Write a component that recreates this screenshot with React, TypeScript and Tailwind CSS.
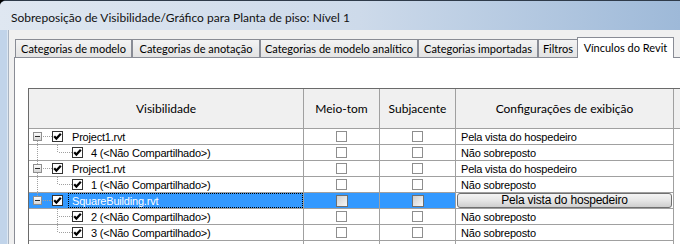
import React from 'react';

type Row = {
  kind: 'root' | 'child';
  label: string;
  display: string;
  first?: boolean;
  moreRoots: boolean;
  lastChild?: boolean;
  selected?: boolean;
};

const rows: Row[] = [
  { kind: 'root', label: 'Project1.rvt', display: 'Pela vista do hospedeiro', first: true, moreRoots: true },
  { kind: 'child', label: '4 (<Não Compartilhado>)', display: 'Não sobreposto', moreRoots: true, lastChild: true },
  { kind: 'root', label: 'Project1.rvt', display: 'Pela vista do hospedeiro', moreRoots: true },
  { kind: 'child', label: '1 (<Não Compartilhado>)', display: 'Não sobreposto', moreRoots: true, lastChild: true },
  { kind: 'root', label: 'SquareBuilding.rvt', display: 'Pela vista do hospedeiro', moreRoots: false, selected: true },
  { kind: 'child', label: '2 (<Não Compartilhado>)', display: 'Não sobreposto', moreRoots: false },
  { kind: 'child', label: '3 (<Não Compartilhado>)', display: 'Não sobreposto', moreRoots: false, lastChild: true },
];

const tabs = [
  { label: 'Categorias de modelo', w: 'w-[117px]' },
  { label: 'Categorias de anotação', w: 'w-[128px]' },
  { label: 'Categorias de modelo analítico', w: 'w-[158px]' },
  { label: 'Categorias importadas', w: 'w-[120px]' },
  { label: 'Filtros', w: 'w-[40px]' },
];

const dot = { stroke: '#a0a0a0', strokeWidth: 1, strokeDasharray: '1 1' };

function VisCheck({ checked }: { checked: boolean }) {
  return (
    <span className="w-[11px] h-[11px] border border-[#333333] bg-white flex items-center justify-center shrink-0">
      {checked && (
        <svg width="9" height="9" viewBox="0 0 9 9">
          <path d="M1.2 4.2 L3.4 6.6 L7.8 1.8" stroke="#000" strokeWidth="2.2" fill="none" />
        </svg>
      )}
    </span>
  );
}

function GridCheck({ selected }: { selected?: boolean }) {
  return selected ? (
    <span className="w-[12px] h-[12px] border border-[#6f6f6f] bg-gradient-to-br from-[#cfcfcf] to-[#f7f7f7]" />
  ) : (
    <span className="w-[11px] h-[11px] border border-[#8e8e8e] bg-white" />
  );
}

function RootLines({ first, moreRoots }: { first?: boolean; moreRoots: boolean }) {
  return (
    <svg width="23" height="15" className="shrink-0">
      <defs>
        <linearGradient id="exp" x1="0" y1="0" x2="0" y2="1">
          <stop offset="0" stopColor="#ffffff" />
          <stop offset="1" stopColor="#d2d2d2" />
        </linearGradient>
      </defs>
      {!first && <line x1="8.5" y1="0" x2="8.5" y2="3" {...dot} />}
      {moreRoots && <line x1="8.5" y1="12" x2="8.5" y2="15" {...dot} />}
      <rect x="4.5" y="3.5" width="8" height="8" fill="url(#exp)" stroke="#8f8f8f" />
      <rect x="6" y="7" width="5" height="1" fill="#2a2a2a" />
      <line x1="14" y1="7.5" x2="23" y2="7.5" {...dot} />
    </svg>
  );
}

function ChildLines({ moreRoots, lastChild }: { moreRoots: boolean; lastChild?: boolean }) {
  return (
    <svg width="43" height="15" className="shrink-0">
      {moreRoots && <line x1="8.5" y1="0" x2="8.5" y2="15" {...dot} />}
      <line x1="28.5" y1="0" x2="28.5" y2={lastChild ? 8 : 15} {...dot} />
      <line x1="30" y1="7.5" x2="43" y2="7.5" {...dot} />
    </svg>
  );
}

function DataRow({ row }: { row: Row }) {
  const sel = row.selected;
  return (
    <div className="flex h-[16px]">
      <div className={`w-[275px] h-full border-r border-b border-[#a0a0a0] flex items-center ${sel ? 'bg-[#3399ff] text-white' : 'text-black'}`}>
        {row.kind === 'root' ? (
          <RootLines first={row.first} moreRoots={row.moreRoots} />
        ) : (
          <ChildLines moreRoots={row.moreRoots} lastChild={row.lastChild} />
        )}
        <VisCheck checked />
        <span
          className={`flex-1 h-full pl-[3px] leading-[14px] border ${row.kind === 'root' ? 'ml-[5px]' : 'ml-[4px]'} ${sel ? 'border-dotted border-black' : 'border-transparent'}`}
        >
          {row.label}
        </span>
      </div>
      <div className={`w-[76px] h-full border-r border-b border-[#a0a0a0] flex items-center justify-center ${sel ? 'bg-[#3399ff]' : ''}`}>
        <GridCheck selected={sel} />
      </div>
      <div className={`w-[76px] h-full border-r border-b border-[#a0a0a0] flex items-center justify-center ${sel ? 'bg-[#3399ff]' : ''}`}>
        <GridCheck selected={sel} />
      </div>
      <div className="w-[218px] h-full border-r border-b border-[#a0a0a0] flex items-center">
        {sel ? (
          <div className="mx-[1px] flex-1 h-full rounded-[3px] border border-[#707070] bg-gradient-to-b from-[#f4f4f4] via-[#e6e6e6] to-[#cfcfcf] flex items-end justify-center text-[12px] leading-[13px] text-black">
            Pela vista do hospedeiro
          </div>
        ) : (
          <span className="pl-[5px] leading-[16px]">{row.display}</span>
        )}
      </div>
      <div className="flex-1" />
    </div>
  );
}

export default function App() {
  return (
    <div className="w-[680px] h-[244px] overflow-hidden bg-black">
      <div className="w-[720px] h-[262px] rounded-tl-[6px] border-t border-[#2f3b4a] overflow-hidden flex flex-col bg-[#c2d4ea]">
        <div className="h-[29px] shrink-0 flex items-center pl-[11px] pt-[4px] bg-gradient-to-r from-[#dfe7f1] via-[#cddaea] to-[#98b5d6] font-['Lato',sans-serif] text-[12px] text-[#111111] whitespace-nowrap">
          Sobreposição de Visibilidade/Gráfico para Planta de piso: Nível 1
        </div>
        <div className="flex flex-1">
          <div className="w-[7px] bg-[#c1d4ea]" />
          <div className="w-px bg-[#dce7f3]" />
          <div className="w-px bg-[#a9b4c2]" />
          <div className="flex-1 bg-[#f0f0f0] flex flex-col pt-[7px]">
            <div className="flex items-end h-[20px] ml-[6px] font-['Lato',sans-serif] text-[11px] text-black whitespace-nowrap">
              {tabs.map((t) => (
                <div
                  key={t.label}
                  className={`${t.w} h-[18px] shrink-0 border-t border-l border-r border-[#898c95] bg-gradient-to-b from-[#f3f3f3] to-[#e3e3e3] flex items-center justify-center pt-[1px]`}
                >
                  {t.label}
                </div>
              ))}
              <div className="relative z-10 -ml-[1px] -mb-[1px] w-[97px] h-[21px] shrink-0 border-t border-l border-r border-[#898c95] bg-white flex items-start justify-center pt-[2px]">
                Vínculos do Revit
              </div>
            </div>
            <div className="ml-[5px] flex-1 border border-[#898c95] bg-white pl-[13px] pt-[30px]">
              <div className="border-l border-t border-[#6a6a6a] font-['Liberation_Sans',Arial,sans-serif] text-[11px] tracking-[-0.2px] whitespace-nowrap">
                <div className="flex h-[40px] bg-[#f0f0f0] font-['Lato',sans-serif] text-[12px] tracking-normal text-black">
                  <div className="w-[275px] border-r border-b border-[#a0a0a0] flex items-center justify-center">Visibilidade</div>
                  <div className="w-[76px] border-r border-b border-[#a0a0a0] flex items-center justify-center">Meio-tom</div>
                  <div className="w-[76px] border-r border-b border-[#a0a0a0] flex items-center justify-center">Subjacente</div>
                  <div className="w-[218px] border-r border-b border-[#a0a0a0] flex items-center justify-center">Configurações de exibição</div>
                  <div className="flex-1 border-b border-[#a0a0a0]" />
                </div>
                {rows.map((r, i) => (
                  <DataRow key={i} row={r} />
                ))}
                <div className="flex h-[16px]">
                  <div className="w-[275px] border-r border-[#a0a0a0]" />
                  <div className="w-[76px] border-r border-[#a0a0a0]" />
                  <div className="w-[76px] border-r border-[#a0a0a0]" />
                  <div className="w-[218px] border-r border-[#a0a0a0]" />
                </div>
              </div>
            </div>
          </div>
        </div>
      </div>
    </div>
  );
}
